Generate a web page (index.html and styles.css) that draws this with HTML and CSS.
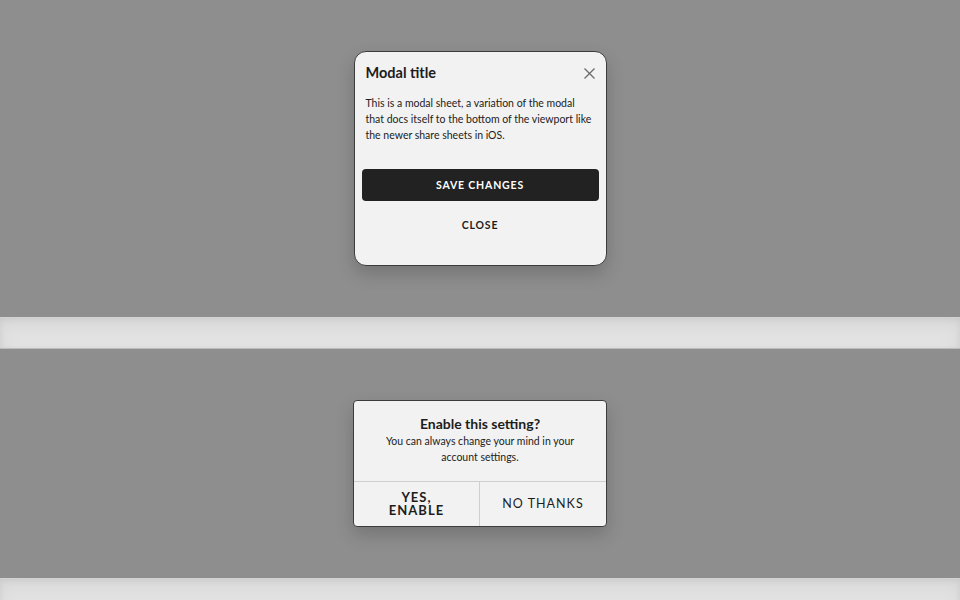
FILE: index.html
```html
<!DOCTYPE html>
<html lang="en">

<head>
    <meta charset="UTF-8">
    <meta name="viewport" content="width=device-width, initial-scale=1.0">
    <title>Modals</title>
    <link rel="stylesheet" href="styles.css">
</head>

<body>
    <div class="stage">
        <div class="sheet">
            <div class="sheet-head">
                <h1>Modal title</h1>
                <button class="x" type="button" aria-label="Close">
                    <svg width="11" height="11" viewBox="0 0 11 11">
                        <path d="M0.5 0.5L10.5 10.5M10.5 0.5L0.5 10.5" stroke="#6b6b6b" stroke-width="1.3" fill="none" />
                    </svg>
                </button>
            </div>
            <p class="sheet-text">This is a modal sheet, a variation of the modal that docs itself to the bottom of the viewport like the newer share sheets in iOS.</p>
            <div class="sheet-actions">
                <button class="save" type="button">Save changes</button>
                <button class="close" type="button">Close</button>
            </div>
        </div>
    </div>

    <div class="divider"></div>

    <div class="stage">
        <div class="alert">
            <div class="alert-body">
                <h2>Enable this setting?</h2>
                <p>You can always change your mind in your account settings.</p>
            </div>
            <div class="alert-actions">
                <button class="yes" type="button">Yes,<br>enable</button>
                <button class="no" type="button">No thanks</button>
            </div>
        </div>
    </div>

    <div class="divider"></div>
</body>

</html>
```

FILE: styles.css
```css
* {
    padding: 0;
    margin: 0;
    box-sizing: border-box;
}

body {
    background-color: #8e8e8e;
    font-family: "Lato", "Noto Sans", sans-serif;
    color: #1d1d1d;
    overflow: hidden;
}

button {
    background: none;
    border: none;
    outline: none;
    font-family: inherit;
    color: inherit;
    cursor: pointer;
}

.stage {
    display: flex;
    justify-content: center;
    padding: 51px 0;
}

.divider {
    height: 32px;
    background-color: #e3e3e3;
    border-top: 1px solid #d2d2d2;
    border-bottom: 1px solid #bcbcbc;
    box-shadow: inset 0 8px 20px rgba(0, 0, 0, .05), inset 0 2px 6px rgba(0, 0, 0, .07);
}

/* modal sheet */
.sheet {
    width: 253px;
    background-color: #f2f2f2;
    border: 1px solid #3c3c3c;
    border-radius: 12px;
    box-shadow: 0 8px 18px rgba(0, 0, 0, .18);
    padding: 11px 7px 32px;
}

.sheet-head {
    display: flex;
    justify-content: space-between;
    align-items: center;
    padding: 0 2px 0 4px;
}

.sheet-head h1 {
    font-size: 14.5px;
    font-weight: 700;
    line-height: 20px;
}

.x {
    display: flex;
    padding: 2px;
}

.sheet-text {
    font-size: 10.5px;
    line-height: 16px;
    padding: 0 4px;
    margin-top: 12px;
    color: #222;
}

.sheet-actions {
    display: flex;
    flex-direction: column;
    gap: 16px;
    margin-top: 26px;
}

.save {
    height: 32px;
    background-color: #222;
    color: #fff;
    border-radius: 4px;
    font-size: 10.5px;
    font-weight: 700;
    letter-spacing: .08em;
    text-transform: uppercase;
}

.close {
    font-size: 10.5px;
    font-weight: 700;
    letter-spacing: .08em;
    text-transform: uppercase;
    line-height: 16px;
}

/* alert */
.alert {
    width: 254px;
    background-color: #f2f2f2;
    border: 1px solid #3c3c3c;
    border-radius: 4px;
    box-shadow: 0 8px 18px rgba(0, 0, 0, .18);
    overflow: hidden;
}

.alert-body {
    text-align: center;
    padding: 14px 16px 16px;
}

.alert-body h2 {
    font-size: 14px;
    font-weight: 700;
    line-height: 18px;
}

.alert-body p {
    font-size: 10.5px;
    line-height: 16px;
    color: #222;
}

.alert-actions {
    display: grid;
    grid-template-columns: 1fr 1fr;
    border-top: 1px solid #cfcfcf;
}

.alert-actions button {
    height: 44px;
    font-size: 12.5px;
    letter-spacing: .08em;
    text-transform: uppercase;
    line-height: 13.5px;
}

.yes {
    font-size: 13px !important;
    font-weight: 700;
    border-right: 1px solid #cfcfcf !important;
}

.no {
    font-weight: 400;
}
```
